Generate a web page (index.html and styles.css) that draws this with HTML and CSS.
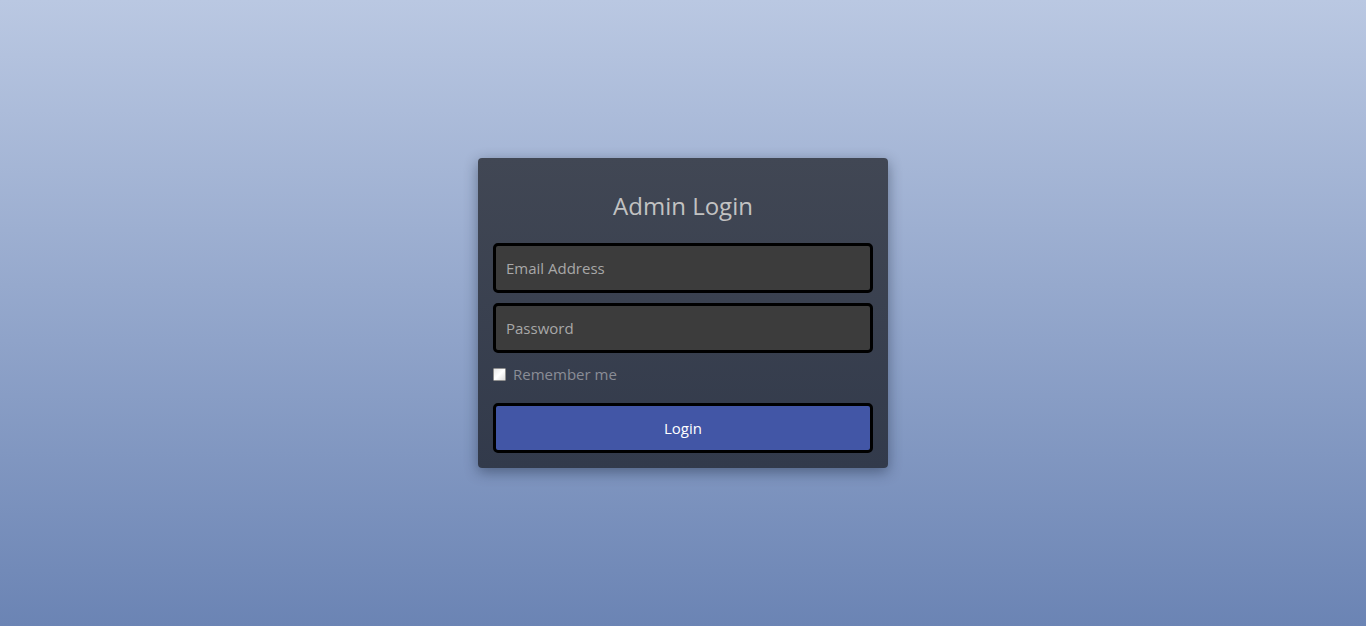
FILE: index.html
```html
<!DOCTYPE html>
<html>
<head>
<meta charset="utf-8">
<link rel="stylesheet" href="styles.css">
</head>
<body>
<main class="page">
  <form class="card">
    <h1 class="title">Admin Login</h1>
    <input class="field" type="text" placeholder="Email Address">
    <input class="field" type="password" placeholder="Password">
    <label class="remember"><input type="checkbox" class="check"> <span>Remember me</span></label>
    <button class="btn" type="button">Login</button>
  </form>
</main>
</body>
</html>
```
FILE: styles.css
```css
* { box-sizing: border-box; }
html, body { margin: 0; height: 100%; }
body {
  font-family: "Open Sans", "Lato", "DejaVu Sans", sans-serif;
  background: linear-gradient(to bottom, #bac8e2 0%, #6b84b4 100%);
}
.page {
  height: 626px;
  display: flex;
  justify-content: center;
  align-items: flex-start;
  padding-top: 158px;
}
.card {
  width: 410px;
  padding: 28px 15px 15px;
  border-radius: 4px;
  background: linear-gradient(to bottom, #414754 0%, #323a4b 100%);
  box-shadow: 0 4px 14px rgba(20, 30, 50, 0.45);
  display: flex;
  flex-direction: column;
}
.title {
  margin: 0 0 17px;
  font-weight: 400;
  font-size: 24px;
  line-height: 40px;
  text-align: center;
  color: #c2c2c2;
}
.field {
  height: 50px;
  width: 100%;
  margin: 0 0 10px;
  padding: 0 10px;
  border: 3px solid #000;
  border-radius: 5px;
  background: #3c3c3c;
  color: #ddd;
  font-family: inherit;
  font-size: 15px;
  outline: none;
}
.field::placeholder { color: #a8a8a8; }
.remember {
  display: flex;
  align-items: center;
  height: 22px;
  margin: 0 0 18px;
  color: #8a8d96;
  font-size: 15px;
}
.check {
  -webkit-appearance: none;
  appearance: none;
  width: 13px;
  height: 13px;
  margin: 0 7px 0 0;
  border: 1px solid #8f8f8f;
  border-radius: 1px;
  background: linear-gradient(135deg, #e6e6e6 0%, #ffffff 50%, #dcdcdc 100%);
}
.btn {
  height: 50px;
  width: 100%;
  border: 3px solid #000;
  border-radius: 5px;
  background: #4256a6;
  color: #fff;
  font-family: inherit;
  font-size: 15px;
}
```
